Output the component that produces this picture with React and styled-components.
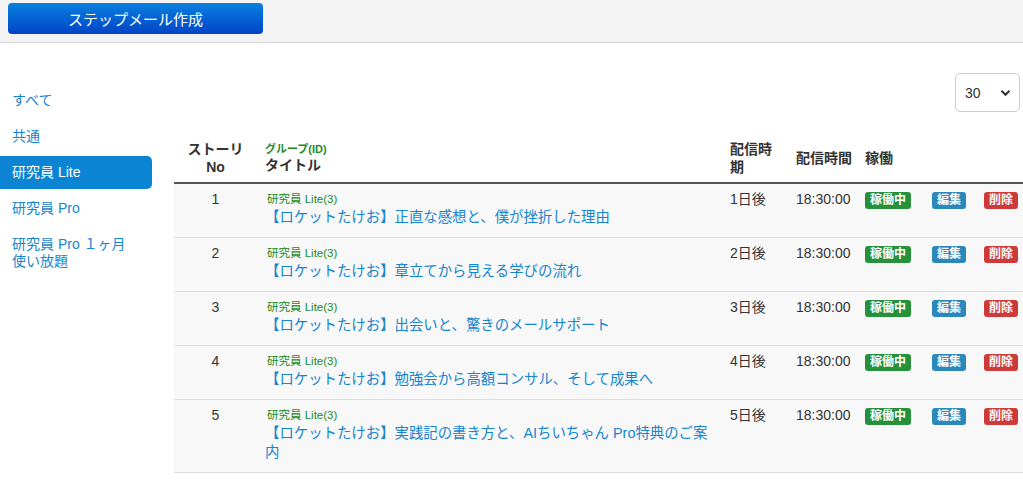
import React from 'react';
import styled, { createGlobalStyle } from 'styled-components';

const GlobalStyle = createGlobalStyle`
  body {
    margin: 0;
    background: #fff;
    font-family: "Liberation Sans", "Noto Sans CJK JP", sans-serif;
    color: #333;
  }
`;

const groups = ['すべて', '共通', '研究員 Lite', '研究員 Pro', '研究員 Pro １ヶ月\n使い放題'];

const stories = [
  { no: 1, title: '【ロケットたけお】正直な感想と、僕が挫折した理由' },
  { no: 2, title: '【ロケットたけお】章立てから見える学びの流れ' },
  { no: 3, title: '【ロケットたけお】出会いと、驚きのメールサポート' },
  { no: 4, title: '【ロケットたけお】勉強会から高額コンサル、そして成果へ' },
  { no: 5, title: '【ロケットたけお】実践記の書き方と、AIちいちゃん Pro特典のご案内' },
];

const App = () => {
  return (
    <>
      <GlobalStyle />
      <TopBar>
        <CreateButton>ステップメール作成</CreateButton>
      </TopBar>
      <Page>
        <Sidebar>
          {groups.map((g, i) => (
            <SideItem key={g} active={i === 2}>{g}</SideItem>
          ))}
        </Sidebar>
        <Main>
          <SelectRow>
            <PerPage>
              <span>30</span>
              <svg width="11" height="8" viewBox="0 0 11 8">
                <path d="M1.5 1.8 L5.5 5.8 L9.5 1.8" fill="none" stroke="#333" strokeWidth="2" />
              </svg>
            </PerPage>
          </SelectRow>
          <Table>
            <colgroup>
              <col style={{ width: 83 }} />
              <col style={{ width: 465 }} />
              <col style={{ width: 66 }} />
              <col style={{ width: 69 }} />
              <col style={{ width: 67 }} />
              <col style={{ width: 52 }} />
              <col style={{ width: 47 }} />
            </colgroup>
            <thead>
              <tr>
                <Th center>ストーリ<br />No</Th>
                <Th>
                  <GroupHead>グループ(ID)</GroupHead>
                  タイトル
                </Th>
                <Th>配信時<br />期</Th>
                <Th nowrap>配信時間</Th>
                <Th>稼働</Th>
                <Th />
                <Th />
              </tr>
            </thead>
            <tbody>
              {stories.map(s => (
                <Row key={s.no}>
                  <Td center>{s.no}</Td>
                  <Td>
                    <Group>研究員 Lite(3)</Group>
                    <TitleLink>{s.title}</TitleLink>
                  </Td>
                  <Td>{s.no}日後</Td>
                  <Td>18:30:00</Td>
                  <Td><Badge color="#27903a">稼働中</Badge></Td>
                  <Td><Badge color="#2a88bb">編集</Badge></Td>
                  <Td><Badge color="#cc3a3a">削除</Badge></Td>
                </Row>
              ))}
            </tbody>
          </Table>
        </Main>
      </Page>
    </>
  );
};

export default App;

const TopBar = styled.div`
  height: 43px;
  background: #f3f3f3;
  border-bottom: 1px solid #d6d6d6;
  padding: 3px 8px 0;
  box-sizing: border-box;`
const CreateButton = styled.button`
  width: 255px;
  height: 31px;
  border: none;
  border-radius: 4px;
  background: linear-gradient(#0a80e0, #0044c6);
  color: #fff;
  font-family: inherit;
  font-size: 15px;
  cursor: pointer;`
const Page = styled.div`
  display: flex;
  align-items: flex-start;`
const Sidebar = styled.nav`
  width: 152px;
  flex-shrink: 0;
  padding-top: 41px;
  display: flex;
  flex-direction: column;
  gap: 3px;`
const SideItem = styled.a`
  display: block;
  padding: 8px 12px;
  line-height: 17px;
  font-size: 14px;
  white-space: pre-line;
  border-radius: 0 5px 5px 0;
  color: ${p => (p.active ? '#fff' : '#1585d0')};
  background: ${p => (p.active ? '#0b84d3' : 'transparent')};
  cursor: pointer;`
const Main = styled.div`
  flex: 1;
  margin-left: 22px;
  min-width: 0;`
const SelectRow = styled.div`
  display: flex;
  justify-content: flex-end;
  padding: 30px 3px 0 0;`
const PerPage = styled.div`
  width: 65px;
  height: 39px;
  box-sizing: border-box;
  border: 1px solid #ccc;
  border-radius: 5px;
  display: flex;
  align-items: center;
  justify-content: space-between;
  padding: 0 8px 0 9px;
  font-size: 14px;
  color: #333;`
const Table = styled.table`
  width: 849px;
  margin-top: 19px;
  border-collapse: collapse;
  table-layout: fixed;
  font-size: 14px;`
const Th = styled.th`
  text-align: ${p => (p.center ? 'center' : 'left')};
  white-space: ${p => (p.nowrap ? 'nowrap' : 'normal')};
  vertical-align: middle;
  padding: 9px 8px 6px;
  line-height: 18px;
  font-weight: bold;
  color: #333;
  border-bottom: 2px solid #555;`
const GroupHead = styled.div`
  font-size: 11px;
  line-height: 14px;
  color: #1f8a1f;`
const Row = styled.tr`
  background: #f8f8f8;
  border-bottom: 1px solid #ddd;`
const Td = styled.td`
  text-align: ${p => (p.center ? 'center' : 'left')};
  vertical-align: top;
  padding: 7px 8px 10px;
  line-height: 17px;
  color: #333;
  white-space: nowrap;`
const Group = styled.div`
  font-size: 11.5px;
  line-height: 17px;
  color: #1f8a1f;
  padding-left: 2px;`
const TitleLink = styled.a`
  display: block;
  font-size: 14.4px;
  line-height: 19px;
  white-space: normal;
  color: #1585d0;
  cursor: pointer;`
const Badge = styled.span`
  display: inline-block;
  margin-top: 1px;
  padding: 0 5px;
  height: 17px;
  line-height: 17px;
  border-radius: 3px;
  background: ${p => p.color};
  color: #fff;
  font-size: 12px;
  font-weight: bold;`
